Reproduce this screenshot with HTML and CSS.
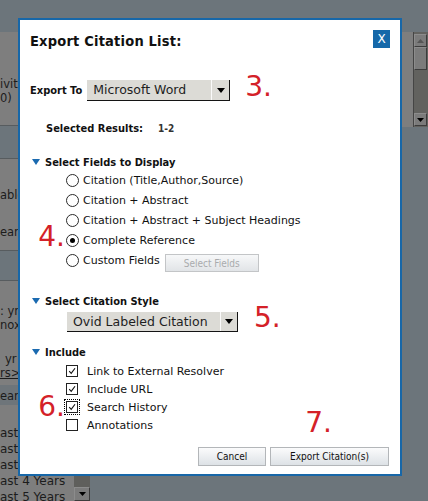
FILE: index.html
```html
<!DOCTYPE html>
<html lang="en">
<head>
<meta charset="utf-8">
<title>Export Citation List</title>
<link rel="stylesheet" href="styles.css">
</head>
<body>
<div class="screen">
  <div class="backdrop">
    <div class="bg-left">
      <div class="band light b1"><div>ivit</div><div>0)</div></div>
      <div class="band dark b2"></div>
      <div class="band light b3"><div>able</div><div class="t-ear">ear</div></div>
      <div class="band dark b4"></div>
      <div class="band light b5">
        <div>: yr</div>
        <div>nox&gt;</div>
        <div class="t-yr">yr</div>
        <div class="t-rs"><u>rs&gt;</u></div>
      </div>
      <div class="band head b6"><span>ear</span></div>
      <div class="band light b7">
        <div class="list">
          <div>ast</div>
          <div>ast</div>
          <div>ast</div>
          <div>ast 4 Years</div>
          <div>ast 5 Years</div>
        </div>
        <div class="list-scroll">
          <div class="ls-track"></div>
          <div class="sb-btn"><svg width="7" height="4" viewBox="0 0 7 4"><path d="M0 0H7L3.5 4Z" fill="#000"/></svg></div>
        </div>
      </div>
    </div>
    <div class="bg-mid"></div>
    <div class="bg-right">
      <div class="rpanel">
        <div class="rgap"></div>
        <div class="vscroll">
          <div class="sb-btn up"><svg width="7" height="4" viewBox="0 0 7 4"><path d="M0 4H7L3.5 0Z" fill="#555"/></svg></div>
          <div class="sb-thumb"></div>
          <div class="sb-track"></div>
          <div class="sb-btn"><svg width="7" height="4" viewBox="0 0 7 4"><path d="M0 0H7L3.5 4Z" fill="#000"/></svg></div>
        </div>
      </div>
    </div>
  </div>

  <div class="dialog">
    <div class="dlg-head">
      <h1 class="dlg-title">Export Citation List:</h1>
      <button class="close">X</button>
    </div>

    <div class="export-row">
      <span class="lbl">Export To</span>
      <div class="select sel-word">
        <span class="sel-text">Microsoft Word</span>
        <span class="sel-arrow"><svg width="8" height="5" viewBox="0 0 8 5"><path d="M0 0H8L4 5Z" fill="#000"/></svg></span>
      </div>
      <span class="step step3">3.</span>
    </div>

    <div class="selected-row">
      <span class="lbl">Selected Results:</span>
      <span class="lbl range">1-2</span>
    </div>

    <div class="fields">
      <div class="sec-head"><svg class="tri" viewBox="0 0 8 6"><path d="M0 0H8L4 6Z" fill="#1a6ab0"/></svg><span class="lbl">Select Fields to Display</span></div>
      <div class="opt-row"><span class="gutter"></span><span class="radio"></span><span>Citation (Title,Author,Source)</span></div>
      <div class="opt-row"><span class="gutter"></span><span class="radio"></span><span>Citation + Abstract</span></div>
      <div class="opt-row"><span class="gutter"></span><span class="radio"></span><span>Citation + Abstract + Subject Headings</span></div>
      <div class="opt-row"><span class="gutter step step4">4.</span><span class="radio on"></span><span>Complete Reference</span></div>
      <div class="opt-row"><span class="gutter"></span><span class="radio"></span><span>Custom Fields</span><button class="btn-fields">Select Fields</button></div>
    </div>

    <div class="style-sec">
      <div class="sec-head"><svg class="tri" viewBox="0 0 8 6"><path d="M0 0H8L4 6Z" fill="#1a6ab0"/></svg><span class="lbl">Select Citation Style</span></div>
      <div class="style-row">
        <div class="select sel-ovid">
          <span class="sel-text">Ovid Labeled Citation</span>
          <span class="sel-arrow"><svg width="8" height="5" viewBox="0 0 8 5"><path d="M0 0H8L4 5Z" fill="#000"/></svg></span>
        </div>
        <span class="step step5">5.</span>
      </div>
    </div>

    <div class="include-sec">
      <div class="sec-head"><svg class="tri" viewBox="0 0 8 6"><path d="M0 0H8L4 6Z" fill="#1a6ab0"/></svg><span class="lbl">Include</span></div>
      <div class="include-body">
        <div class="checklist">
          <div class="check-row"><span class="gutter"></span><span class="check on"><svg viewBox="0 0 10 10"><path d="M2.2 5.2L4.2 7.4L8 2.2" stroke="#111" stroke-width="1.1" fill="none"/></svg></span><span>Link to External Resolver</span></div>
          <div class="check-row"><span class="gutter"></span><span class="check on"><svg viewBox="0 0 10 10"><path d="M2.2 5.2L4.2 7.4L8 2.2" stroke="#111" stroke-width="1.1" fill="none"/></svg></span><span>Include URL</span></div>
          <div class="check-row"><span class="gutter step step6">6.</span><span class="check on focus"><svg viewBox="0 0 10 10"><path d="M2.2 5.2L4.2 7.4L8 2.2" stroke="#111" stroke-width="1.1" fill="none"/></svg></span><span>Search History</span></div>
          <div class="check-row"><span class="gutter"></span><span class="check"></span><span>Annotations</span></div>
        </div>
        <span class="step step7">7.</span>
      </div>
    </div>

    <div class="dlg-foot">
      <button class="btn btn-cancel">Cancel</button>
      <button class="btn btn-export">Export Citation(s)</button>
    </div>
  </div>
</div>
</body>
</html>
```

FILE: styles.css
```css
* { box-sizing: border-box; }
html, body { margin: 0; padding: 0; }
body {
  font-family: "DejaVu Sans", sans-serif;
  font-size: 11px;
  color: #111;
  background: #6c757b;
}
.screen {
  position: relative;
  width: 428px;
  height: 501px;
  overflow: hidden;
  background: #6c757b;
}

/* ---------- page behind the overlay ---------- */
.backdrop {
  display: grid;
  grid-template-columns: 90px 1fr 26px;
  height: 100%;
}
.bg-left {
  padding-top: 32px;
  display: flex;
  flex-direction: column;
  font-size: 11.5px;
  color: #1c1c1c;
}
.band {
  border-bottom: 1px solid #575c5f;
  overflow: hidden;
  white-space: nowrap;
}
.band.light { background: #7e7e7e; }
.band.dark { background: #6c757b; }
.band.head { background: #6e757a; }
.b1 { height: 94px; padding-top: 45px; line-height: 14px; }
.b2 { height: 33px; }
.b3 { height: 92px; padding-top: 29px; line-height: 14px; }
.t-ear { margin-top: 23px; }
.b4 { height: 30px; }
.b5 { height: 104px; padding-top: 23px; line-height: 14px; border-bottom: none; }
.t-yr { margin-top: 20px; padding-left: 5px; }
.t-rs { margin-top: 0; }
.b6 { height: 20px; padding-top: 4px; line-height: 15px; border-bottom: none; }
.b7 {
  flex: 1;
  border-bottom: none;
  display: grid;
  grid-template-columns: 74px 16px;
}
.list { padding-top: 20px; line-height: 16px; font-size: 12px; }
.list-scroll {
  padding-top: 70px;
  display: flex;
  flex-direction: column;
  background: #7e7e7e;
}
.ls-track { height: 12px; background: #5f5f5c; }
.list-scroll .sb-btn { height: 14px; }

.bg-right { padding-top: 32px; }
.rpanel {
  height: 95px;
  background: #7e7e7e;
  display: grid;
  grid-template-columns: 11px 15px;
}
.vscroll {
  border-left: 1px solid #454545;
  padding: 2px 1px 1px 0;
  display: flex;
  flex-direction: column;
  background: #62625f;
}
.sb-btn {
  height: 13px;
  background: #7b7b7b;
  border: 1px solid #3c3c3c;
  border-top-color: #8c8c8c;
  border-left-color: #8c8c8c;
  display: flex;
  align-items: center;
  justify-content: center;
}
.sb-thumb {
  height: 23px;
  background: #7b7b7b;
  border: 1px solid #3c3c3c;
  border-top-color: #8c8c8c;
  border-left-color: #8c8c8c;
}
.sb-track { flex: 1; background: #62625f; }

/* ---------- dialog ---------- */
.dialog {
  position: absolute;
  left: 18px;
  top: 18px;
  width: 384px;
  background: #fff;
  border: 2px solid #1767a8;
}
.lbl {
  font-family: "DejaVu Sans Condensed", "DejaVu Sans", sans-serif;
  font-stretch: condensed;
  font-weight: bold;
  font-size: 11px;
  color: #111;
}
.dlg-head {
  display: flex;
  justify-content: space-between;
  align-items: flex-start;
  height: 28px;
  padding: 10px 10px 0 10px;
}
.dlg-title {
  margin: 2px 0 0;
  font-family: "DejaVu Sans Condensed", "DejaVu Sans", sans-serif;
  font-stretch: condensed;
  font-weight: bold;
  font-size: 14.5px;
  line-height: 18px;
  letter-spacing: 0.2px;
  color: #111;
}
.close {
  width: 17px;
  height: 18px;
  padding: 0;
  border: 0;
  background: #1568a9;
  color: #fff;
  font-family: "DejaVu Sans", sans-serif;
  font-size: 12px;
  line-height: 18px;
  text-align: center;
}

.export-row {
  display: flex;
  align-items: center;
  height: 21px;
  margin-top: 32px;
  padding-left: 10px;
}
.export-row .lbl { margin-right: 5px; }
.select {
  display: flex;
  background: #dcdbd6;
  border-right: 1px solid #141414;
  border-bottom: 1px solid #141414;
  font-size: 12.5px;
  color: #1e1e1e;
}
.sel-word { width: 143px; height: 21px; }
.sel-ovid { width: 171px; height: 20px; }
.sel-text { flex: 1; padding-left: 6px; line-height: 19px; white-space: nowrap; }
.sel-arrow {
  width: 18px;
  border-left: 1px solid #fafafa;
  display: flex;
  align-items: center;
  justify-content: center;
}
.sel-ovid .sel-arrow { width: 17px; }

.step {
  color: #d42128;
  font-family: "DejaVu Sans", sans-serif;
  font-size: 28px;
  line-height: 28px;
  font-weight: normal;
}
.step3 { align-self: flex-start; margin-left: 15px; margin-top: -7px; }

.selected-row {
  display: flex;
  margin-top: 20px;
  padding-left: 26px;
  line-height: 16px;
}
.range { margin-left: 15px; font-size: 10px; color: #333; }

.sec-head {
  display: flex;
  align-items: center;
  height: 16px;
  padding-left: 12px;
}
.tri { width: 8px; height: 6px; margin-right: 5px; flex: none; }

.fields { margin-top: 17px; }
.opt-row {
  display: flex;
  align-items: center;
  height: 20px;
  white-space: nowrap;
}
.gutter { width: 46px; flex: none; text-align: right; padding-right: 1px; }
.radio {
  width: 13px;
  height: 13px;
  flex: none;
  margin-right: 4px;
  border: 1px solid #2a2a2a;
  border-radius: 50%;
  background: #fff;
  display: flex;
  align-items: center;
  justify-content: center;
}
.radio.on::after {
  content: "";
  width: 5px;
  height: 5px;
  border-radius: 50%;
  background: #000;
}
.step4 { align-self: flex-start; line-height: 20px; margin-top: -3px; }
.btn-fields {
  margin-left: 5px;
  margin-top: 6px;
  width: 94px;
  height: 18px;
  padding: 0;
  border: 1px solid #c3c5c7;
  background: linear-gradient(#f7f8f9, #e1e4e7);
  color: #a9abad;
  font-family: "DejaVu Sans Condensed", "DejaVu Sans", sans-serif;
  font-stretch: condensed;
  font-size: 10px;
}

.style-sec { margin-top: 23px; }
.style-row {
  display: flex;
  height: 20px;
  margin-top: 3px;
  padding-left: 47px;
}
.step5 { align-self: flex-start; margin-left: 16px; margin-top: -8px; }

.include-sec { margin-top: 12px; }
.include-body {
  display: flex;
  align-items: flex-end;
  margin-top: 2px;
}
.check-row {
  display: flex;
  align-items: center;
  height: 18px;
  white-space: nowrap;
}
.check {
  width: 12px;
  height: 12px;
  flex: none;
  margin-right: 9px;
  border: 1px solid #222;
  background: #fff;
  display: flex;
}
.check svg { width: 10px; height: 10px; }
.check.focus { outline: 1px dotted #000; outline-offset: 1px; }
.step6 { align-self: flex-start; line-height: 18px; }
.step7 { margin-left: auto; margin-right: 68px; margin-bottom: -3px; }

.dlg-foot {
  display: flex;
  justify-content: flex-end;
  gap: 4px;
  padding: 13px 11px 8px 0;
}
.btn {
  height: 19px;
  padding: 0;
  border: 1px solid #b3b6b9;
  background: linear-gradient(#fbfbfc, #dde2e6);
  color: #111;
  font-family: "DejaVu Sans Condensed", "DejaVu Sans", sans-serif;
  font-stretch: condensed;
  font-size: 10px;
}
.btn-cancel { width: 68px; }
.btn-export { width: 119px; }
```
